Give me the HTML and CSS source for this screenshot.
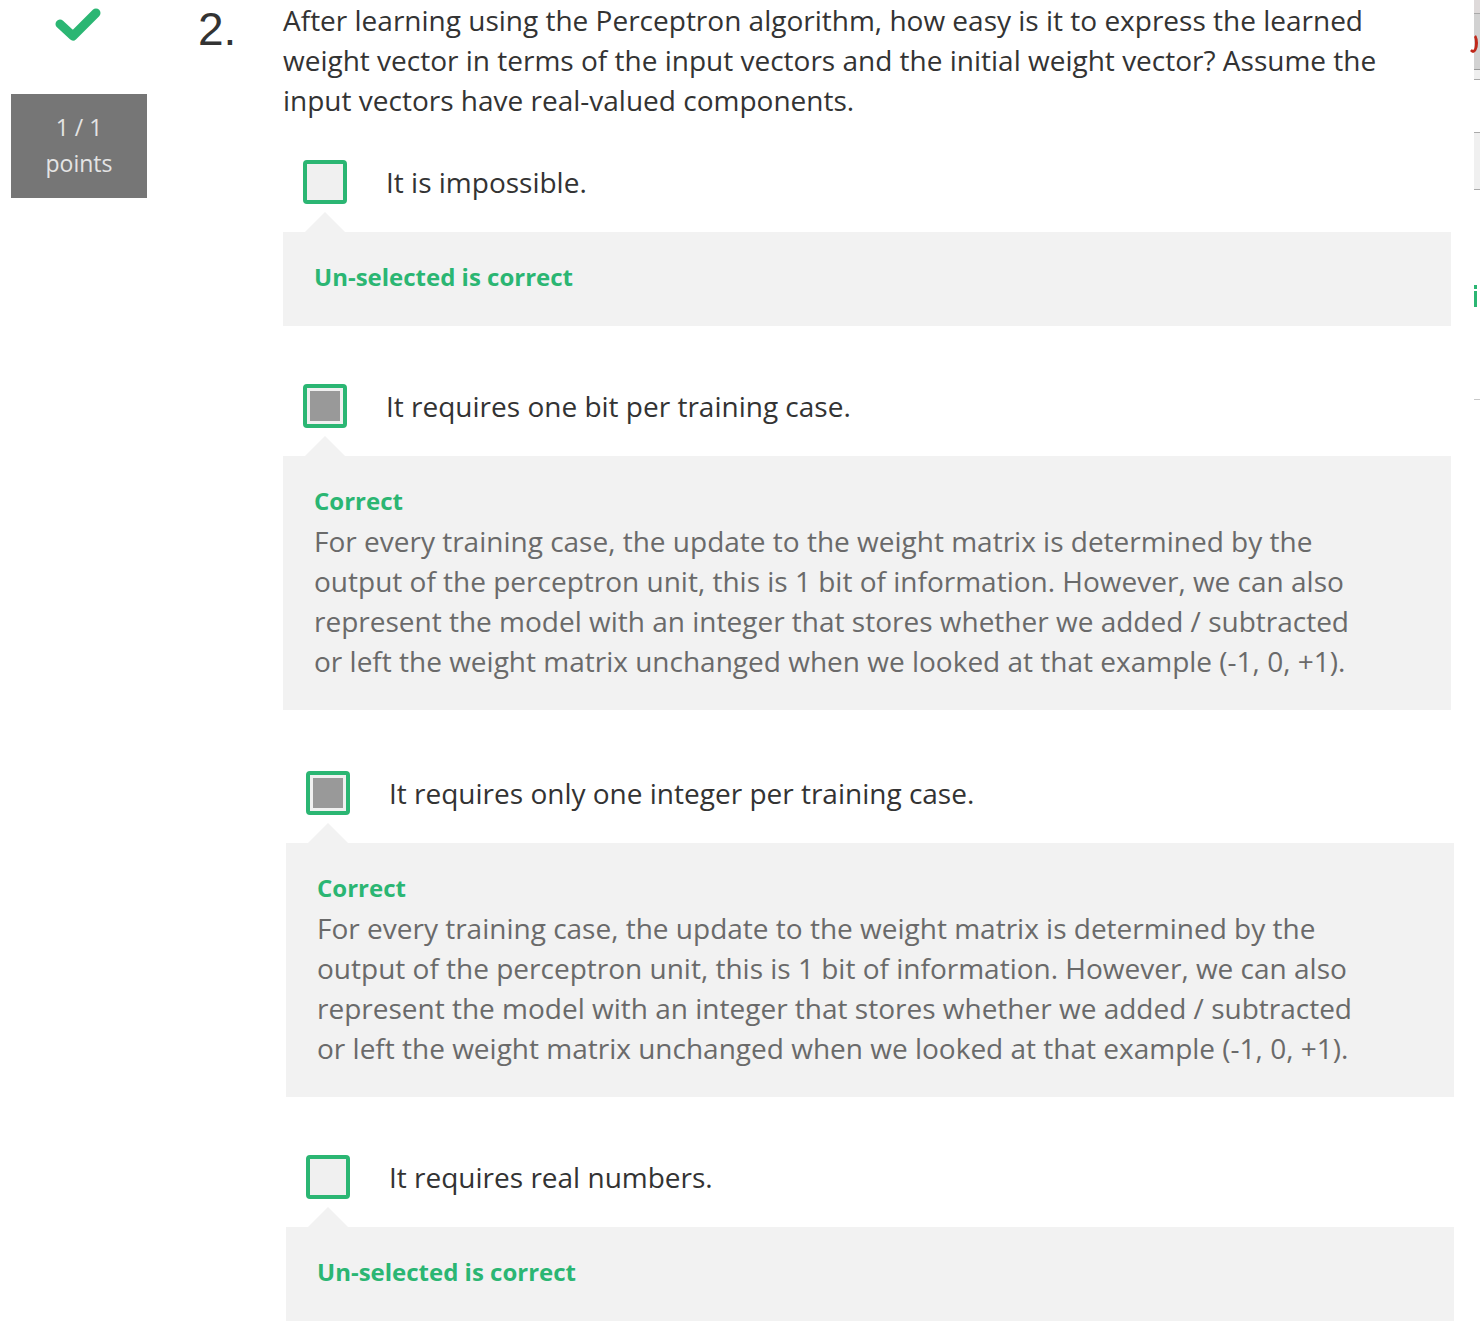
FILE: index.html
```html
<!DOCTYPE html>
<html lang="en">
<head>
<meta charset="utf-8">
<title>Quiz question 2</title>
<link rel="stylesheet" href="styles.css">
</head>
<body>
<div class="page">
  <div class="main">
    <div class="score-col">
      <svg class="check" width="48" height="40" viewBox="0 0 48 40" aria-hidden="true">
        <path d="M6 19 L19 31 L42 8" fill="none" stroke="#2bb673" stroke-width="9" stroke-linecap="round" stroke-linejoin="round"/>
      </svg>
      <div class="points">1 / 1<br>points</div>
    </div>
    <div class="num">2.</div>
    <div class="question">
      <p class="prompt">After learning using the Perceptron algorithm, how easy is it to express the learned weight vector in terms of the input vectors and the initial weight vector? Assume the input vectors have real-valued components.</p>

      <div class="option">
        <div class="opt-row">
          <span class="box"></span>
          <span class="opt-text">It is impossible.</span>
        </div>
        <div class="feedback">
          <div class="fb-label">Un-selected is correct</div>
        </div>
      </div>

      <div class="option">
        <div class="opt-row">
          <span class="box checked"><span class="fill"></span></span>
          <span class="opt-text">It requires one bit per training case.</span>
        </div>
        <div class="feedback">
          <div class="fb-label">Correct</div>
          <div class="fb-body">For every training case, the update to the weight matrix is determined by the output of the perceptron unit, this is 1 bit of information. However, we can also represent the model with an integer that stores whether we added / subtracted or left the weight matrix unchanged when we looked at that example (-1, 0, +1).</div>
        </div>
      </div>

      <div class="option shifted extra-top">
        <div class="opt-row">
          <span class="box checked"><span class="fill"></span></span>
          <span class="opt-text">It requires only one integer per training case.</span>
        </div>
        <div class="feedback">
          <div class="fb-label">Correct</div>
          <div class="fb-body">For every training case, the update to the weight matrix is determined by the output of the perceptron unit, this is 1 bit of information. However, we can also represent the model with an integer that stores whether we added / subtracted or left the weight matrix unchanged when we looked at that example (-1, 0, +1).</div>
        </div>
      </div>

      <div class="option shifted">
        <div class="opt-row">
          <span class="box"></span>
          <span class="opt-text">It requires real numbers.</span>
        </div>
        <div class="feedback">
          <div class="fb-label">Un-selected is correct</div>
        </div>
      </div>
    </div>
  </div>
  <div class="strip" aria-hidden="true">
    <div class="s-top"></div>
    <div class="s-dark"><span class="s-red"></span></div>
    <div class="s-light"></div>
    <div class="s-gap1"></div>
    <div class="s-panel"></div>
    <div class="s-gap2"></div>
    <div class="s-i"><span class="s-dot"></span><span class="s-stem"></span></div>
    <div class="s-gap3"></div>
    <div class="s-rule"></div>
  </div>
</div>
</body>
</html>
```

FILE: styles.css
```css
* { box-sizing: border-box; }
html, body { margin: 0; padding: 0; background: #fff; }
body {
  font-family: "Open Sans", "Noto Sans", sans-serif;
  color: #333;
  width: 1480px;
  overflow: hidden;
}
.page { display: flex; width: 1480px; height: 1332px; overflow: hidden; }
.main { display: flex; width: 1474px; flex: none; }

.score-col {
  width: 198px;
  flex: none;
  padding-left: 11px;
  display: flex;
  flex-direction: column;
}
.check {
  display: block;
  margin: 5px 0 0 43px;
}
.points {
  width: 136px;
  margin-top: 49px;
  background: #767676;
  color: #e4e4e4;
  text-align: center;
  font-size: 23px;
  line-height: 36px;
  padding: 15px 0 17px;
}

.num {
  width: 85px;
  flex: none;
  font-family: "Liberation Sans", Arial, sans-serif;
  font-size: 46px;
  line-height: 56px;
  color: #333;
  padding-top: 1px;
}

.question { width: 1168px; flex: none; }
.prompt {
  margin: 0;
  font-size: 28px;
  line-height: 40px;
  color: #333;
}

.option { margin-top: 58px; }
.prompt + .option { margin-top: 40px; }
.option.shifted { margin-left: 3px; margin-right: -3px; }
.option.extra-top { margin-top: 61px; }

.opt-row {
  display: flex;
  align-items: center;
  gap: 40px;
  padding-left: 20px;
  height: 44px;
}
.box {
  width: 44px;
  height: 44px;
  flex: none;
  border: 4px solid #2bb673;
  border-radius: 4px;
  background: #f0f0f0;
  padding: 3px;
  display: flex;
}
.box .fill { flex: 1; background: #999; }
.opt-text { font-size: 28px; line-height: 40px; color: #333; margin-left: -1px; }

.feedback {
  position: relative;
  margin-top: 28px;
  background: #f2f2f2;
  padding: 25px 80px 29px 32px;
}
.feedback::before {
  content: "";
  position: absolute;
  left: 22px;
  top: -20px;
  width: 0;
  height: 0;
  border-left: 20px solid transparent;
  border-right: 20px solid transparent;
  border-bottom: 20px solid #f2f2f2;
}
.fb-label {
  font-weight: 700;
  font-size: 24px;
  line-height: 40px;
  color: #2bb673;
  margin-left: -1px;
}
.fb-body {
  font-size: 28px;
  line-height: 40px;
  color: #6a6a6a;
  margin-left: -1px;
}

.strip { width: 6px; flex: none; display: flex; flex-direction: column; }
.s-top { height: 14px; background: #dedada; border-bottom: 1px solid #a9a9a9; }
.s-dark { height: 56px; background: #d2d2d2; border-bottom: 1px solid #9a9a9a; position: relative; }
.s-red {
  position: absolute; left: -6px; top: 19px;
  width: 10px; height: 20px;
  border: 3px solid #c0281a; border-radius: 50%;
  border-left-color: transparent; border-top-color: transparent;
}
.s-light { height: 10px; background: #efefef; border-bottom: 1px solid #aaa; }
.s-gap1 { height: 52px; }
.s-panel { height: 58px; background: #f0f0f0; border-top: 1px solid #aaa; border-bottom: 1px solid #aaa; }
.s-gap2 { height: 95px; }
.s-i { height: 22px; display: flex; flex-direction: column; gap: 2px; }
.s-dot { width: 3px; height: 4px; background: #2bb673; }
.s-stem { width: 3px; height: 16px; background: #2bb673; }
.s-gap3 { height: 92px; }
.s-rule { height: 1px; background: #c8c8c8; }
```
